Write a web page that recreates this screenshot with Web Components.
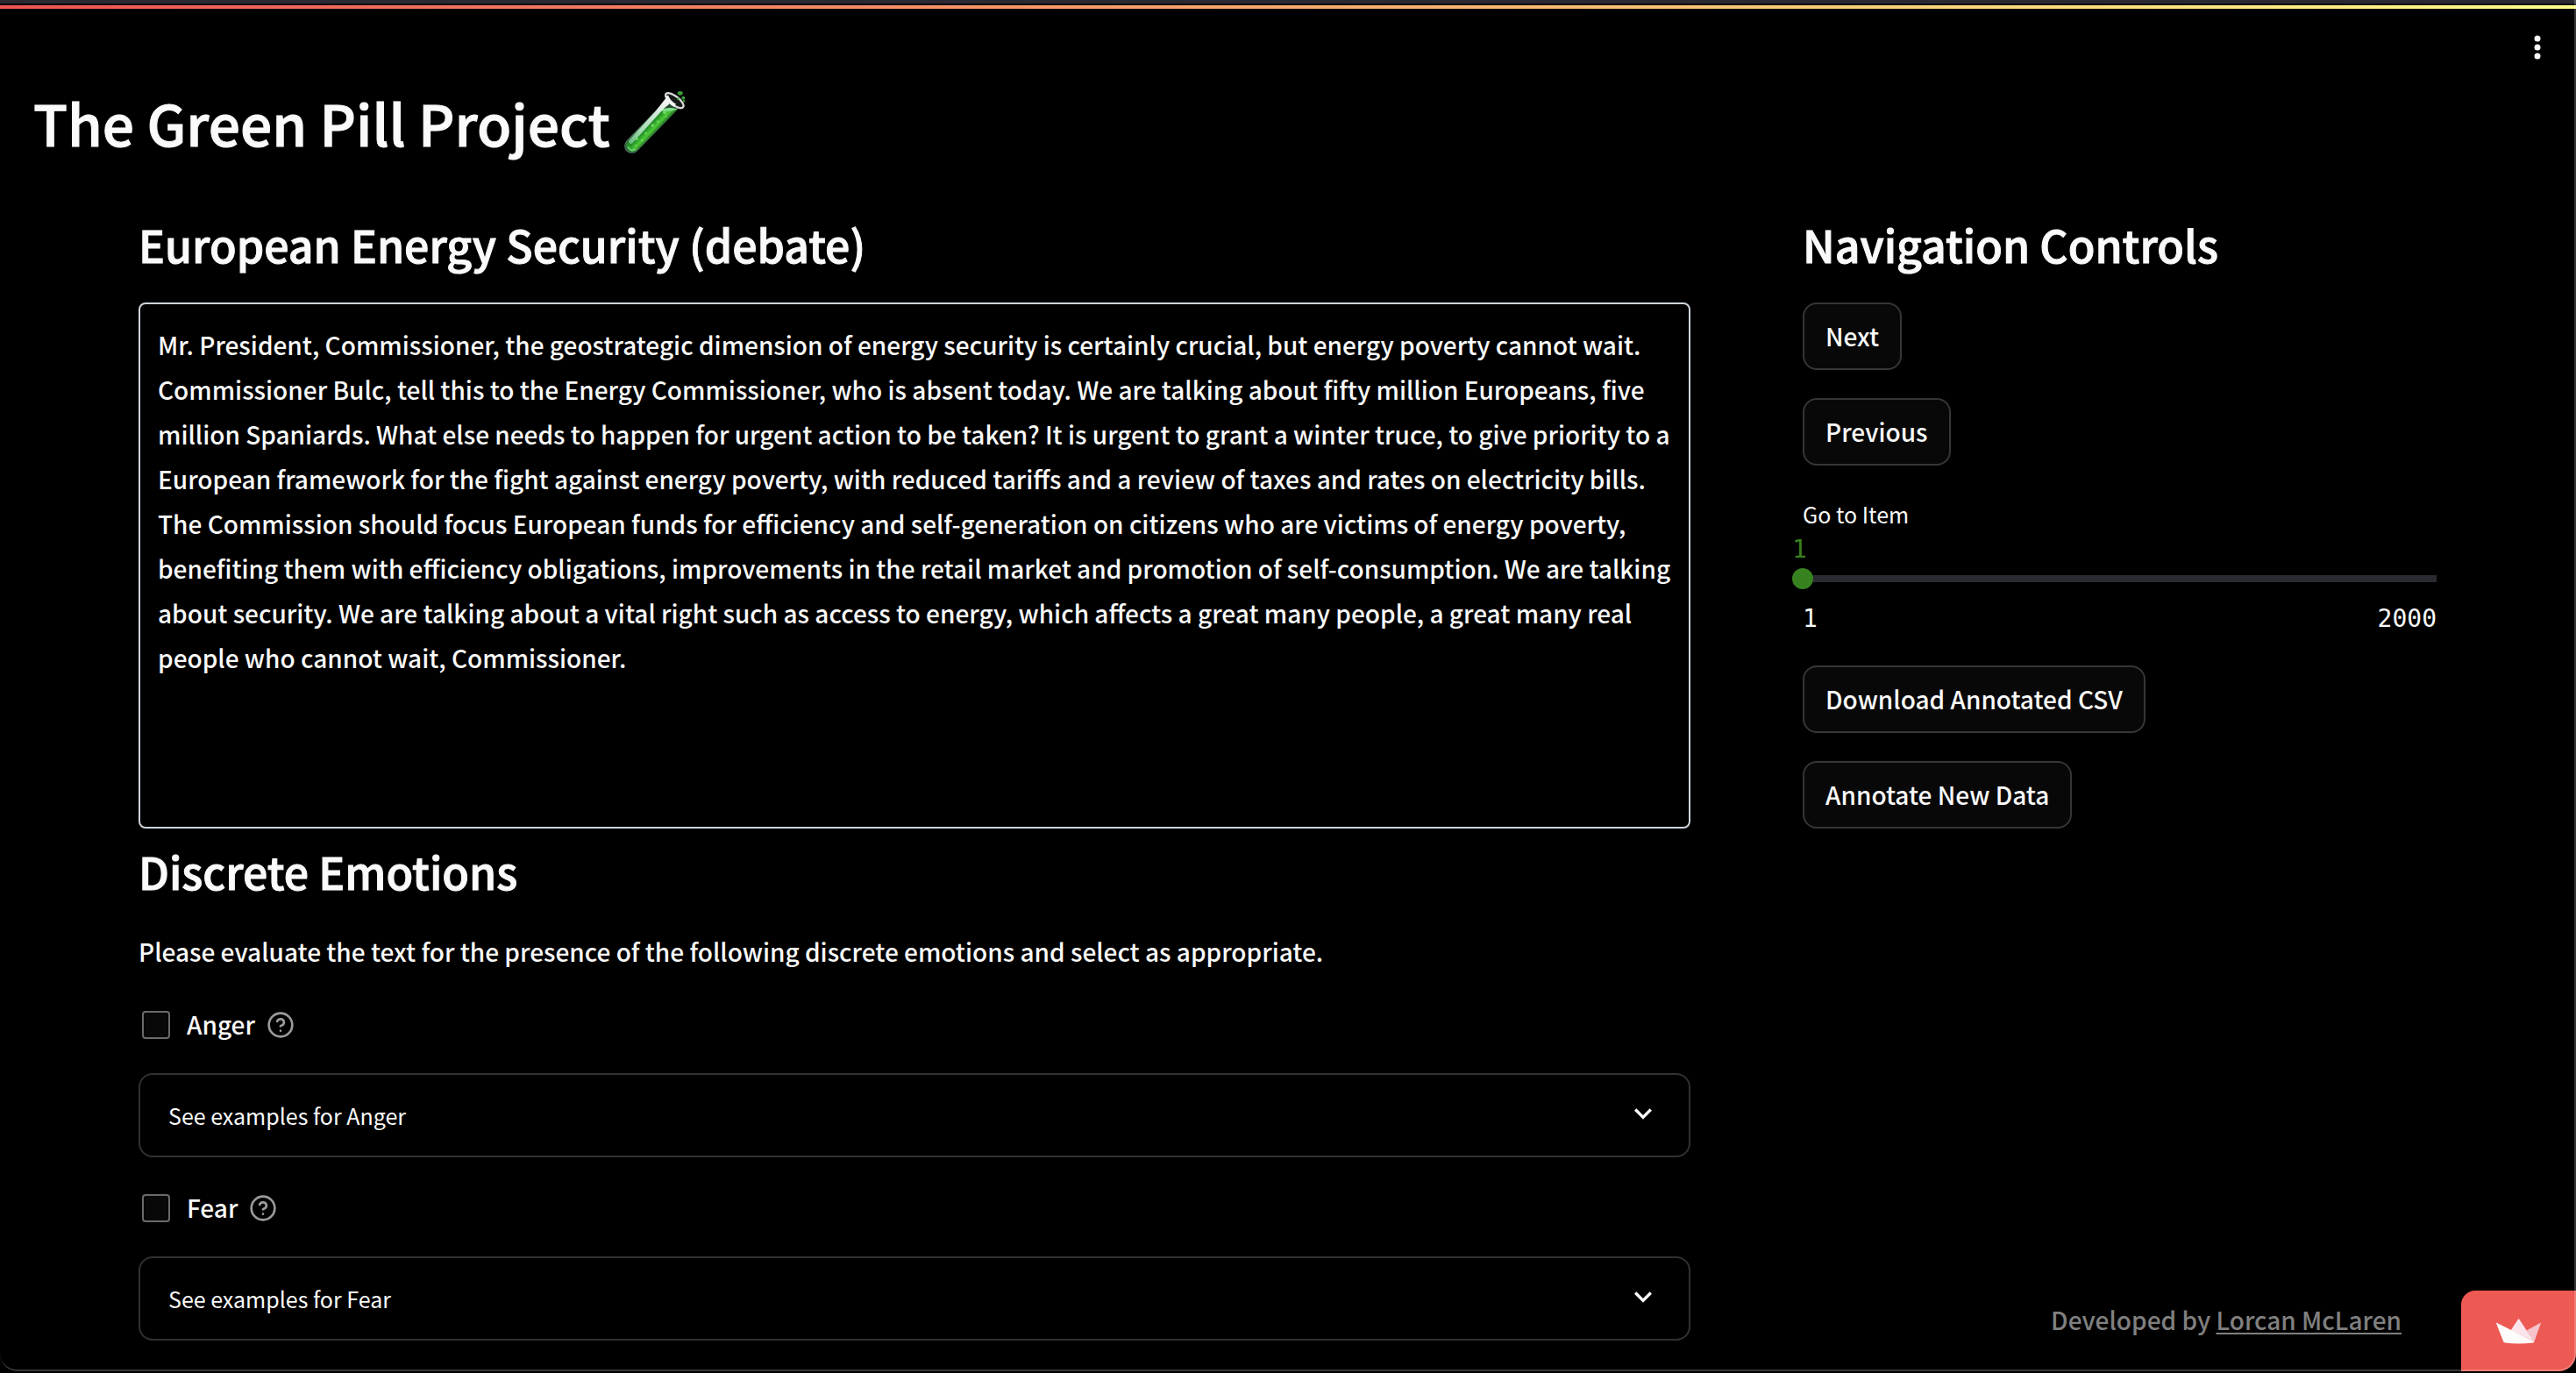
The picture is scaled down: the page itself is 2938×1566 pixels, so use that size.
<!DOCTYPE html>
<html lang="en">
<head>
<meta charset="utf-8">
<title>The Green Pill Project</title>
<style>
  html { background: #000; }
  body {
    margin: 0;
    background: #000;
    color: #fafafa;
    font: 500 28px/51px "Noto Sans CJK JP", "Noto Sans", sans-serif;
    --edge: #363636;
    --surface: #080808;
    --accent: #37811f;
    --muted: #808080;
  }
</style>
</head>
<body>
<app-shell>
  <app-title slot="title">The Green Pill Project</app-title>
  <section-panel slot="main">
    <section-heading>European Energy Security (debate)</section-heading>
    <speech-box>Mr. President, Commissioner, the geostrategic dimension of energy security is certainly crucial, but energy poverty cannot wait. Commissioner Bulc, tell this to the Energy Commissioner, who is absent today. We are talking about fifty million Europeans, five million Spaniards. What else needs to happen for urgent action to be taken? It is urgent to grant a winter truce, to give priority to a European framework for the fight against energy poverty, with reduced tariffs and a review of taxes and rates on electricity bills. The Commission should focus European funds for efficiency and self-generation on citizens who are victims of energy poverty, benefiting them with efficiency obligations, improvements in the retail market and promotion of self-consumption. We are talking about security. We are talking about a vital right such as access to energy, which affects a great many people, a great many real people who cannot wait, Commissioner.</speech-box>
    <emotion-list>
      <section-heading>Discrete Emotions</section-heading>
      <span slot="intro">Please evaluate the text for the presence of the following discrete emotions and select as appropriate.</span>
      <emotion-item slot="items" name="Anger"></emotion-item>
      <emotion-item slot="items" name="Fear"></emotion-item>
    </emotion-list>
  </section-panel>
  <section-panel slot="side">
    <section-heading>Navigation Controls</section-heading>
    <control-stack>
      <action-button>Next</action-button>
      <action-button>Previous</action-button>
      <item-slider label="Go to Item" min="1" max="2000" value="1"></item-slider>
      <action-button>Download Annotated CSV</action-button>
      <action-button>Annotate New Data</action-button>
    </control-stack>
    <credit-line slot="end" href="#lorcan-mclaren" author="Lorcan McLaren">Developed by</credit-line>
  </section-panel>
</app-shell>

<script>
  const define = (name, html, setup) => {
    const template = document.createElement('template');
    template.innerHTML = '<style>*{box-sizing:border-box}</style>' + html;
    customElements.define(name, class extends HTMLElement {
      connectedCallback() {
        if (this.shadowRoot) return;
        const root = this.attachShadow({ mode: 'open' });
        root.append(template.content.cloneNode(true));
        if (setup) setup(this, root);
      }
    });
  };

  define('app-shell', `
    <style>
      :host { display: flex; flex-direction: column; min-height: 100vh; }
      .strip { height: 10px; border-top: 4px solid #2b2a33; padding-top: 2px; background: #08080b; }
      .strip div { height: 4px; background: linear-gradient(90deg, #ee5551, #fffd8a); }
      header { display: flex; justify-content: flex-end; padding: 24px 24px 27px; }
      .menu { width: 40px; height: 40px; padding: 0; border: 0; background: none; color: #fafafa; }
      .menu svg { display: block; }
      .title { padding: 0 38px; }
      main { display: grid; grid-template-columns: 71fr 29fr; gap: 128px; padding: 71px 159px 34px 158px; }
      .frame { position: fixed; inset: 0 0 2px 0; border: solid rgba(255,255,255,.21); border-width: 0 2px 2px 0; border-radius: 0 0 20px 20px; pointer-events: none; }
      .badge { position: fixed; right: 0; bottom: 2px; width: 131px; height: 92px; display: flex; align-items: center; justify-content: center; background: #ed5a53; border-radius: 16px 0 20px 0; }
    </style>
    <div class="strip"><div></div></div>
    <header>
      <button class="menu" type="button" aria-label="Main menu">
        <svg width="40" height="40" viewBox="0 0 24 24" fill="currentColor"><circle cx="12" cy="6" r="2.1"/><circle cx="12" cy="12" r="2.1"/><circle cx="12" cy="18" r="2.1"/></svg>
      </button>
    </header>
    <div class="title"><slot name="title"></slot></div>
    <main><slot name="main"></slot><slot name="side"></slot></main>
    <a class="badge" href="#streamlit" aria-label="Hosted with Streamlit">
      <svg width="51" height="29" viewBox="441 191 153 86">
        <path fill="#f7c4cc" d="M594 205 571 270 545 231 590 206Q594 203 594 205Z"/>
        <path fill="#fbe4ec" d="M491 230 515 194Q518 189 521 194L545 231 571 269Z"/>
        <path fill="#fffdfb" d="M441 206Q441 203 446 206L570 269Q571 273 567 273 518 279 471 273 467 272 466 270Z"/>
      </svg>
    </a>
    <div class="frame"></div>`);

  define('app-title', `
    <style>
      :host { display: block; }
      h1 { display: flex; align-items: center; gap: 14px; margin: 0; font-size: 64px; line-height: 76px; font-weight: 500; -webkit-text-stroke: 1px; }
    </style>
    <h1><slot></slot>
      <svg width="72" height="72" viewBox="60 38 216 216" role="img" aria-label="test tube">
        <defs>
          <linearGradient id="liquid" gradientUnits="userSpaceOnUse" x1="130" y1="140" x2="172" y2="180">
            <stop offset="0" stop-color="#2e7d3a"/><stop offset=".5" stop-color="#249128"/><stop offset=".8" stop-color="#4cc934"/><stop offset="1" stop-color="#267a25"/>
          </linearGradient>
          <linearGradient id="shine" gradientUnits="userSpaceOnUse" x1="215" y1="65" x2="80" y2="220">
            <stop offset="0" stop-color="#fafafa"/><stop offset=".3" stop-color="#d5e8dc"/><stop offset=".7" stop-color="#a5dcb4"/><stop offset="1" stop-color="#64b57a"/>
          </linearGradient>
        </defs>
        <path d="M228 88 92 228" stroke="#557e66" stroke-width="51" stroke-linecap="round"/>
        <path d="M228 88 92 228" stroke="#24482e" stroke-width="44" stroke-linecap="round"/>
        <path fill="url(#liquid)" d="M180 107Q215 94 248 103L110 243Q90 255 77 240 66 226 80 211Z"/>
        <path fill="#7fe08c" d="M182 106Q214 92 248 102 220 116 182 106Z"/>
        <path fill="#e4e6e6" d="M207 66 236 72 204 98 176 106Z"/>
        <path d="M214 75 89 213" stroke="url(#shine)" stroke-width="15" stroke-linecap="round"/>
        <path d="M79 232Q86 248 104 240" fill="none" stroke="#6bcf7b" stroke-width="5" stroke-linecap="round"/>
        <ellipse cx="238" cy="73" rx="37" ry="15" transform="rotate(38 238 73)" fill="#161a18" stroke="#d8dada" stroke-width="7"/>
        <path d="M211 57Q218 78 240 90" fill="none" stroke="#f2f2f2" stroke-width="12"/>
        <g fill="#72d865"><circle cx="204" cy="114" r="6"/><circle cx="163" cy="158" r="5"/><circle cx="181" cy="145" r="4"/><circle cx="140" cy="185" r="4"/><circle cx="109" cy="204" r="5"/><circle cx="127" cy="209" r="4"/><circle cx="209" cy="127" r="3"/><circle cx="106" cy="226" r="3"/></g>
        <g fill="#3f9c3a"><ellipse cx="257" cy="48" rx="9" ry="7"/><circle cx="268" cy="64" r="6"/><circle cx="270" cy="75" r="4"/><circle cx="250" cy="67" r="4"/></g>
      </svg>
    </h1>`);

  define('section-panel', `
    <style>:host { display: flex; flex-direction: column; justify-content: space-between; min-width: 0; }</style>
    <div><slot></slot></div><slot name="end"></slot>`);

  define('section-heading', `
    <style>
      :host { display: block; padding-bottom: 37px; }
      h2 { margin: 0; font-size: 50px; line-height: 60px; font-weight: 500; -webkit-text-stroke: 1px; }
    </style>
    <h2><slot></slot></h2>`);

  define('speech-box', `
    <style>
      :host { display: block; padding-bottom: 18px; }
      p { margin: 0; height: 600px; overflow: auto; padding: 21px 20px; border: 2px solid #ced4da; border-radius: 8px; }
    </style>
    <p><slot></slot></p>`);

  define('emotion-list', `
    <style>
      :host { display: block; }
      p { margin: 0 0 32px; }
      .items { display: flex; flex-direction: column; gap: 32px; }
    </style>
    <slot></slot>
    <p><slot name="intro"></slot></p>
    <div class="items"><slot name="items"></slot></div>`);

  define('emotion-item', `
    <style>
      :host { display: flex; flex-direction: column; gap: 32px; }
      .row { display: flex; align-items: center; gap: 13px; padding: 2px 0 0 4px; line-height: 47px; }
      label { display: flex; align-items: center; gap: 19px; }
      input { appearance: none; width: 32px; height: 32px; margin: 0; border: 2px solid #6a6a6a; border-radius: 4px; background: var(--surface); }
      input:checked { background: var(--accent); }
      .help { width: 32px; height: 32px; padding: 0; border: 0; background: none; color: #9a9a9a; }
      svg { display: block; }
      details { border: 2px solid #313131; border-radius: 16px; }
      summary { display: flex; align-items: center; justify-content: space-between; height: 92px; padding: 0 32px; font-size: 25px; font-weight: 400; list-style: none; }
      summary svg { margin-bottom: 4px; }
    </style>
    <div class="row">
      <label for="present"><input id="present" type="checkbox"><span class="name"></span></label>
      <button class="help" type="button" aria-label="Help">
        <svg width="32" height="32" viewBox="0 0 24 24" fill="none" stroke="currentColor" stroke-width="2" stroke-linecap="round" stroke-linejoin="round"><circle cx="12" cy="12" r="10"/><path d="M9.09 9a3 3 0 0 1 5.83 1c0 2-3 3-3 3"/><path d="M12 17h.01"/></svg>
      </button>
    </div>
    <details>
      <summary><span class="examples"></span>
        <svg width="40" height="40" viewBox="0 0 24 24" fill="currentColor"><path d="M7.41 8.59 12 13.17l4.59-4.58L18 10l-6 6-6-6 1.41-1.41z"/></svg>
      </summary>
    </details>`, (host, root) => {
      const name = host.getAttribute('name');
      root.querySelector('.name').textContent = name;
      root.querySelector('.examples').textContent = 'See examples for ' + name;
    });

  define('control-stack', `
    <style>:host { display: flex; flex-direction: column; align-items: stretch; gap: 32px; }</style>
    <slot></slot>`);

  define('action-button', `
    <style>
      :host { display: flex; }
      button { height: 77px; padding: 0 24px; border: 2px solid var(--edge); border-radius: 16px; background: var(--surface); color: inherit; font: inherit; }
    </style>
    <button type="button"><slot></slot></button>`);

  define('item-slider', `
    <style>
      :host { display: flex; flex-direction: column; gap: 2px; padding-bottom: 5px; }
      label { font-size: 25px; font-weight: 400; line-height: 46px; }
      output, .range { font: 28px/32px "DejaVu Sans Mono", monospace; }
      output { margin-left: -12px; color: var(--accent); }
      input { appearance: none; width: calc(100% + 24px); height: 30px; margin: 0 -12px; background: linear-gradient(#2a2b30, #2a2b30) center / calc(100% - 24px) 8px no-repeat; }
      input::-webkit-slider-thumb { appearance: none; width: 24px; height: 24px; border: 0; border-radius: 50%; background: var(--accent); }
      .range { display: flex; justify-content: space-between; padding-top: 13px; }
    </style>
    <label for="item"></label>
    <output for="item"></output>
    <input id="item" type="range">
    <div class="range"><span class="min"></span><span class="max"></span></div>`, (host, root) => {
      const get = key => host.getAttribute(key);
      const input = root.querySelector('input');
      const output = root.querySelector('output');
      input.min = get('min');
      input.max = get('max');
      input.value = get('value');
      output.textContent = input.value;
      input.addEventListener('input', () => { output.textContent = input.value; });
      root.querySelector('label').textContent = get('label');
      root.querySelector('.min').textContent = get('min');
      root.querySelector('.max').textContent = get('max');
    });

  define('credit-line', `
    <style>
      :host { display: block; padding-right: 40px; text-align: right; line-height: 47px; color: var(--muted); }
      a { color: inherit; text-decoration: underline; text-decoration-thickness: 2px; text-underline-offset: 3px; text-decoration-skip-ink: none; }
    </style>
    <slot></slot> <a></a>`, (host, root) => {
      const link = root.querySelector('a');
      link.href = host.getAttribute('href');
      link.textContent = host.getAttribute('author');
    });
</script>
</body>
</html>
